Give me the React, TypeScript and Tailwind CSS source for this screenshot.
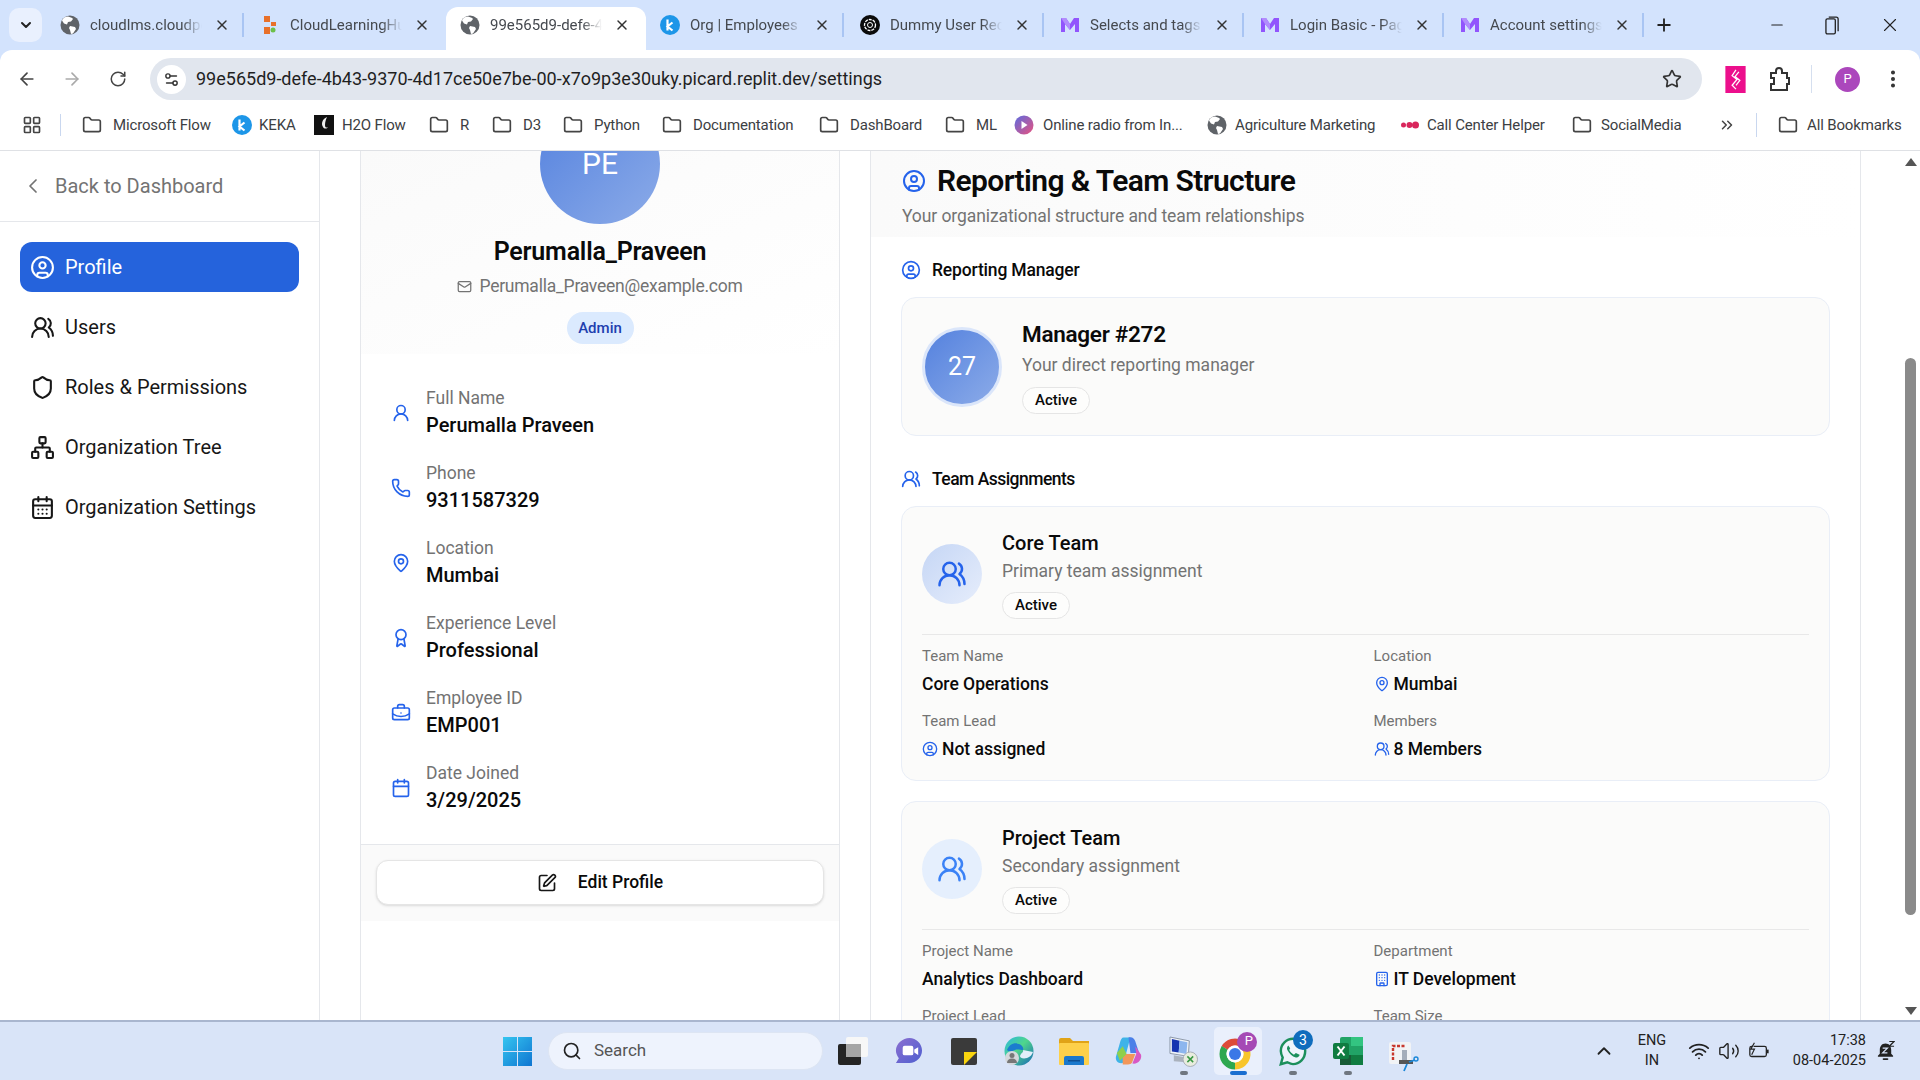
import {
  ArrowLeft,
  ArrowRight,
  Award,
  BriefcaseBusiness,
  Building,
  Calendar,
  CalendarDays,
  ChevronDown,
  ChevronLeft,
  ChevronsRight,
  ChevronUp,
  CircleUser,
  EllipsisVertical,
  Folder,
  LayoutGrid,
  Mail,
  MapPin,
  Minus,
  Network,
  Phone,
  Plus,
  RotateCw,
  Search,
  Settings2,
  Shield,
  SquarePen,
  Star,
  UserRound,
  UsersRound,
  Volume2,
  Wifi,
  X,
} from "lucide-react";
import type { ReactNode } from "react";

function Globe() {
  return (
    <svg viewBox="0 0 20 20" className="w-5 h-5 shrink-0">
      <circle cx="10" cy="10" r="9.5" fill="#5f6368" />
      <path d="M8 1.5c2 1 4 1 5 2.5l-2 2.5-3 .5-1 2.5-3-1-2-3C3 3 5.500 1.500 8 1.500zM10 11l5 1 1 2-3 4.500-2 .5-1-4-1-2z" fill="#fff" />
    </svg>
  );
}

function CloudHub() {
  return (
    <svg viewBox="0 0 20 20" className="w-5 h-5 shrink-0">
      <rect x="4" y="1" width="6" height="6" fill="#e8702a" />
      <rect x="4" y="12" width="6" height="7" fill="#e8702a" />
      <rect x="11" y="7" width="5" height="4" fill="#e8702a" />
      <circle cx="13" cy="15" r="2.500" fill="#6cc04a" />
    </svg>
  );
}

function Keka() {
  return (
    <svg viewBox="0 0 20 20" className="w-5 h-5 shrink-0">
      <circle cx="10" cy="10" r="10" fill="#1d96e8" />
      <path d="M7.500 4.500v11M12.500 7.500l-5 4 5 4" fill="none" stroke="#fff" strokeWidth="2.200" />
    </svg>
  );
}

function GptLogo() {
  return (
    <svg viewBox="0 0 20 20" className="w-5 h-5 shrink-0">
      <circle cx="10" cy="10" r="10" fill="#0b0b0b" />
      <circle cx="10" cy="10" r="5.500" fill="none" stroke="#fff" strokeWidth="1.300" strokeDasharray="3 1" />
      <circle cx="10" cy="10" r="2.500" fill="none" stroke="#fff" strokeWidth="1" />
    </svg>
  );
}

function MLogo() {
  return (
    <svg viewBox="0 0 20 20" className="w-5 h-5 shrink-0">
      <path d="M1 3l5 0 4 6 4-6 5 0v14h-4V9l-5 6-5-6v8H1z" fill="#9155fd" />
      <path d="M1 3l5 0 4 6v6L5 9z" fill="#b18cfd" />
    </svg>
  );
}

const tabs = [
  { title: "cloudlms.cloudpoint", icon: <Globe /> },
  { title: "CloudLearningHub", icon: <CloudHub /> },
  { title: "99e565d9-defe-4b43", icon: <Globe />, active: true },
  { title: "Org | Employees", icon: <Keka /> },
  { title: "Dummy User Records", icon: <GptLogo /> },
  { title: "Selects and tags", icon: <MLogo /> },
  { title: "Login Basic - Pages", icon: <MLogo /> },
  { title: "Account settings", icon: <MLogo /> },
];

function TabStrip() {
  return (
    <div className="h-[50px] bg-[#d3e3fd] flex items-end relative shrink-0">
      <div className="w-[33px] h-[34px] ml-[9px] mb-[8px] mr-[4px] rounded-[10px] bg-[#e9f0fe] flex items-center justify-center">
        <ChevronDown className="w-[16px] h-[16px] text-[#222]" strokeWidth={3} />
      </div>
      {tabs.map((t, i) => (
        <div
          key={t.title}
          className={`w-[200px] flex items-center pl-[14px] ${
            t.active ? "h-[43px] bg-white rounded-t-[12px] pb-[7px]" : "h-[50px]"
          }`}
        >
          {t.icon}
          <span className="ml-[10px] w-[112px] text-[15px] leading-[20px] text-[#45494f] whitespace-nowrap overflow-hidden [mask-image:linear-gradient(90deg,#000_82%,transparent)]">
            {t.title}
          </span>
          <X className="ml-[12px] w-[16px] h-[16px] text-[#333]" strokeWidth={2.2} />
          {!t.active && i !== 1 && <div className="ml-[12px] w-[2px] h-[24px] bg-[#a9c5f3]" />}
        </div>
      ))}
      <div className="h-[50px] flex items-center">
        <Plus className="ml-[8px] w-[20px] h-[20px] text-[#222]" strokeWidth={2.2} />
        <Minus className="ml-[94px] w-[18px] h-[18px] text-[#222]" strokeWidth={1.400} />
        <svg viewBox="0 0 16 20" className="ml-[39px] w-[15px] h-[19px]">
          <rect x="1" y="3" width="10" height="16" rx="1.500" fill="none" stroke="#222" strokeWidth="1.400" />
          <path d="M4 1h8a2 2 0 0 1 2 2v13" fill="none" stroke="#222" strokeWidth="1.400" />
        </svg>
        <X className="ml-[39px] w-[22px] h-[22px] text-[#222]" strokeWidth={1.200} />
      </div>
    </div>
  );
}

function Toolbar() {
  return (
    <div className="h-[55px] bg-[#d3e3fd] shrink-0">
      <div className="h-full pt-[3px] bg-white rounded-t-[12px] flex items-center">
        <ArrowLeft className="ml-[17px] w-[20px] h-[20px] text-[#444]" strokeWidth={2} />
        <ArrowRight className="ml-[25px] w-[20px] h-[20px] text-[#aaa]" strokeWidth={2} />
        <RotateCw className="ml-[27px] w-[18px] h-[18px] text-[#444]" strokeWidth={2} />
        <div className="ml-[23px] w-[1552px] h-[42px] rounded-full bg-[#e1e6ee] flex items-center">
          <div className="ml-[7px] w-[29px] h-[29px] rounded-full bg-white flex items-center justify-center">
            <Settings2 className="w-[17px] h-[17px] text-[#333]" strokeWidth={2} />
          </div>
          <span className="ml-[10px] text-[18px] leading-[24px] text-[#1f1f1f] whitespace-nowrap">
            99e565d9-defe-4b43-9370-4d17ce50e7be-00-x7o9p3e30uky.picard.replit.dev/settings
          </span>
          <Star className="ml-auto mr-[20px] w-[20px] h-[20px] text-[#333]" strokeWidth={2} />
        </div>
        <svg viewBox="0 0 21 28" className="ml-[23px] w-[21px] h-[27px]">
          <rect width="21" height="28" fill="#ec0f8c" />
          <path d="M11 4l-4 6 5 4-5 6 4 4M14 6l-4 5 5 4-4 5" fill="none" stroke="#fff" strokeWidth="1.300" />
        </svg>
        <svg viewBox="0 0 20 24" className="ml-[24px] w-[20px] h-[24px]">
          <path d="M1 6h5V4a3 3 0 0 1 6 0v2h5v5h2v6h-2v6H1v-6h3v-6H1z" fill="none" stroke="#333" strokeWidth="2" />
        </svg>
        <div className="ml-[21px] w-[1px] h-[28px] bg-[#d5dfef]" />
        <div className="ml-[23px] w-[25px] h-[25px] rounded-full bg-[#ab47bc] flex items-center justify-center text-white text-[13px]">
          P
        </div>
        <EllipsisVertical className="ml-[22px] w-[22px] h-[22px] text-[#333]" strokeWidth={2.400} />
      </div>
    </div>
  );
}

function BmFolder() {
  return <Folder className="w-[20px] h-[20px] text-[#444] shrink-0" strokeWidth={2} />;
}

const bookmarks: { label: string; w: string; gap: string; icon: ReactNode }[] = [
  { label: "Microsoft Flow", w: "w-[150px]", gap: "gap-[11px]", icon: <BmFolder /> },
  { label: "KEKA", w: "w-[82px]", gap: "gap-[7px]", icon: <Keka /> },
  {
    label: "H2O Flow",
    w: "w-[115px]",
    gap: "gap-[8px]",
    icon: (
      <svg viewBox="0 0 20 20" className="w-5 h-5 shrink-0">
        <rect width="20" height="20" fill="#111" />
        <path d="M13 2c-5 2-6 7-4 10 1 2 4 2 5 0-1 1-3 1-3-2 0-3 1-6 2-8z" fill="#eee" />
      </svg>
    ),
  },
  { label: "R", w: "w-[63px]", gap: "gap-[11px]", icon: <BmFolder /> },
  { label: "D3", w: "w-[71px]", gap: "gap-[11px]", icon: <BmFolder /> },
  { label: "Python", w: "w-[99px]", gap: "gap-[11px]", icon: <BmFolder /> },
  { label: "Documentation", w: "w-[157px]", gap: "gap-[11px]", icon: <BmFolder /> },
  { label: "DashBoard", w: "w-[126px]", gap: "gap-[11px]", icon: <BmFolder /> },
  { label: "ML", w: "w-[69px]", gap: "gap-[11px]", icon: <BmFolder /> },
  {
    label: "Online radio from In...",
    w: "w-[193px]",
    gap: "gap-[9px]",
    icon: (
      <svg viewBox="0 0 20 20" className="w-5 h-5 shrink-0">
        <defs>
          <linearGradient id="radio" x1="0" y1="0" x2="1" y2="1">
            <stop offset="0" stopColor="#5b6be0" />
            <stop offset="1" stopColor="#e9527e" />
          </linearGradient>
        </defs>
        <circle cx="10" cy="10" r="9.500" fill="url(#radio)" />
        <path d="M7.500 6l6 4-6 4z" fill="#fff" />
      </svg>
    ),
  },
  { label: "Agriculture Marketing", w: "w-[193px]", gap: "gap-[8px]", icon: <Globe /> },
  {
    label: "Call Center Helper",
    w: "w-[172px]",
    gap: "gap-[7px]",
    icon: (
      <svg viewBox="0 0 20 20" className="w-5 h-5 shrink-0">
        <circle cx="3.500" cy="10" r="2.500" fill="#d9265c" />
        <circle cx="9.500" cy="10" r="3" fill="#d9265c" />
        <circle cx="15.500" cy="10" r="3.500" fill="#d9265c" />
      </svg>
    ),
  },
  { label: "SocialMedia", w: "w-[147px]", gap: "gap-[9px]", icon: <BmFolder /> },
];

function BookmarksBar() {
  return (
    <div className="h-[46px] pb-[5px] bg-white flex items-center border-b border-[#dfe1e5] shrink-0 text-[15px] leading-[20px] text-[#3c4043] tracking-[-0.01em]">
      <LayoutGrid className="ml-[22px] w-[20px] h-[20px] text-[#444]" strokeWidth={2} />
      <div className="ml-[18px] w-[1px] h-[22px] bg-[#c9d7ef]" />
      <div className="ml-[21px] flex items-center">
        {bookmarks.map((b) => (
          <div key={b.label} className={`${b.w} ${b.gap} flex items-center whitespace-nowrap`}>
            {b.icon}
            <span>{b.label}</span>
          </div>
        ))}
      </div>
      <ChevronsRight className="ml-[-1px] w-[18px] h-[18px] text-[#444]" strokeWidth={2} />
      <div className="ml-[20px] w-[1px] h-[24px] bg-[#c9d7ef]" />
      <div className="ml-[21px] flex items-center gap-[9px] whitespace-nowrap">
        <BmFolder />
        <span>All Bookmarks</span>
      </div>
    </div>
  );
}

const navItems = [
  { label: "Profile", icon: CircleUser, active: true },
  { label: "Users", icon: UsersRound },
  { label: "Roles & Permissions", icon: Shield },
  { label: "Organization Tree", icon: Network },
  { label: "Organization Settings", icon: CalendarDays },
];

function Sidebar() {
  return (
    <aside className="w-[320px] shrink-0 border-r border-[#e5e7eb] bg-white">
      <div className="h-[71px] border-b border-[#e5e7eb] flex items-center pl-[21px] text-[#737373]">
        <ChevronLeft className="w-[24px] h-[24px]" strokeWidth={1.750} />
        <span className="ml-[10px] text-[20px] leading-[28px]">Back to Dashboard</span>
      </div>
      <nav className="pt-[20px] pl-[20px] flex flex-col gap-[10px] w-[299px]">
        {navItems.map((n) => (
          <div
            key={n.label}
            className={`h-[50px] flex items-center pl-[10px] gap-[10px] rounded-[12px] text-[20px] ${
              n.active ? "bg-[#2563dc] text-white" : "text-[#171717]"
            }`}
          >
            <n.icon className="w-[25px] h-[25px] shrink-0" strokeWidth={2} />
            <span>{n.label}</span>
          </div>
        ))}
      </nav>
    </aside>
  );
}

const infoRows = [
  { label: "Full Name", value: "Perumalla Praveen", icon: UserRound },
  { label: "Phone", value: "9311587329", icon: Phone },
  { label: "Location", value: "Mumbai", icon: MapPin },
  { label: "Experience Level", value: "Professional", icon: Award },
  { label: "Employee ID", value: "EMP001", icon: BriefcaseBusiness },
  { label: "Date Joined", value: "3/29/2025", icon: Calendar },
];

function ProfileCard() {
  return (
    <section className="w-[480px] shrink-0 border-x border-[#e5e7eb] bg-white">
      <div className="h-[203px] bg-gradient-to-br from-[#fafafa] to-white flex flex-col items-center">
        <div className="mt-[-47px] w-[120px] h-[120px] shrink-0 rounded-full bg-gradient-to-br from-[#5481de] to-[#8cabe8] flex items-center justify-center text-white text-[30px]">
          <span className="mt-[-2px]">PE</span>
        </div>
        <h2 className="mt-[12px] text-[25px] leading-[32px] font-semibold tracking-[-0.008em] text-[#0a0a0a]">Perumalla_Praveen</h2>
        <div className="mt-[6px] flex items-center gap-[7px] text-[17.500px] leading-[24px] tracking-[-0.014em] text-[#737373]">
          <Mail className="w-[15px] h-[15px]" strokeWidth={2} />
          <span>Perumalla_Praveen@example.com</span>
        </div>
        <div className="mt-[14px] w-[67px] h-[32px] rounded-full bg-[#dbeafe] flex items-center justify-center text-[15px] font-medium text-[#1e40af]">
          Admin
        </div>
      </div>
      <div className="pt-[32px] pb-[29px] flex flex-col gap-[21px] pl-[30px]">
        {infoRows.map((r) => (
          <div key={r.label} className="flex items-center">
            <r.icon className="w-[20px] h-[20px] text-[#2563eb] shrink-0" strokeWidth={2} />
            <div className="ml-[15px]">
              <div className="text-[17.500px] leading-[24px] text-[#737373]">{r.label}</div>
              <div className="text-[20px] leading-[30px] font-medium text-[#0a0a0a]">{r.value}</div>
            </div>
          </div>
        ))}
      </div>
      <div className="border-t border-[#e5e7eb] bg-[#fafafa] pt-[15px] pb-[16px] px-[15px]">
        <div className="h-[45px] rounded-[12px] border border-[#e5e5e5] bg-white shadow-sm flex items-center justify-center gap-[21px]">
          <SquarePen className="w-[20px] h-[20px] text-[#171717]" strokeWidth={2} />
          <span className="text-[17.500px] font-medium text-[#0a0a0a]">Edit Profile</span>
        </div>
      </div>
    </section>
  );
}

function ActiveBadge() {
  return (
    <div className="w-[68px] h-[27px] rounded-full border border-[#e5e5e5] flex items-center justify-center text-[15px] font-medium text-[#0a0a0a] bg-[#fdfdfc]">
      Active
    </div>
  );
}

function SectionTitle({ icon, title, tracking }: { icon: ReactNode; title: string; tracking: string }) {
  return (
    <div className="flex items-center h-[26px] gap-[11px]">
      {icon}
      <span className={`text-[17.500px] leading-[26px] font-medium text-[#0a0a0a] ${tracking}`}>{title}</span>
    </div>
  );
}

function Field({ label, value, icon }: { label: string; value: string; icon?: ReactNode }) {
  return (
    <div>
      <div className="text-[15px] leading-[20px] text-[#737373]">{label}</div>
      <div className="mt-[5px] flex items-center gap-[4px] text-[17.500px] leading-[26px] font-medium text-[#0a0a0a]">
        {icon}
        <span>{value}</span>
      </div>
    </div>
  );
}

function TeamCard({
  name,
  sub,
  circle,
  iconColor,
  children,
}: {
  name: string;
  sub: string;
  circle: string;
  iconColor: string;
  children: ReactNode;
}) {
  return (
    <div className="rounded-[15px] border border-[#e9eef7] bg-[#fbfbfa] px-[20px] pt-[22px] pb-[18px]">
      <div className="flex items-center gap-[20px]">
        <div className={`w-[60px] h-[60px] rounded-full flex items-center justify-center ${circle}`}>
          <UsersRound className={`w-[30px] h-[30px] ${iconColor}`} strokeWidth={2} />
        </div>
        <div>
          <div className="text-[20px] leading-[28px] font-medium text-[#0a0a0a]">{name}</div>
          <div className="mt-[2px] text-[17.500px] leading-[24px] text-[#737373]">{sub}</div>
          <div className="mt-[9px]">
            <ActiveBadge />
          </div>
        </div>
      </div>
      <div className="mt-[15px] border-t border-[#e8e8e8] pt-[11px] grid grid-cols-2 gap-x-4 gap-y-[14px]">{children}</div>
    </div>
  );
}

const blueSm = "w-[16px] h-[16px] text-[#2563eb] shrink-0";

function ReportingCard() {
  return (
    <section className="flex-1 border-x border-[#e5e7eb] bg-white">
      <div className="h-[86px] bg-gradient-to-r from-[#fafafa] to-white pl-[31px] pt-[12px]">
        <div className="flex items-center h-[36px] gap-[11px]">
          <CircleUser className="w-[24px] h-[24px] text-[#2563eb]" strokeWidth={2} />
          <h2 className="text-[30px] leading-[36px] font-semibold tracking-[-0.02em] text-[#0a0a0a]">Reporting &amp; Team Structure</h2>
        </div>
        <p className="mt-[5px] text-[17.500px] leading-[24px] tracking-[-0.005em] text-[#737373]">
          Your organizational structure and team relationships
        </p>
      </div>
      <div className="px-[30px] pt-[20px]">
        <SectionTitle
          icon={<CircleUser className="w-[20px] h-[20px] text-[#2563eb]" strokeWidth={2} />}
          title="Reporting Manager"
          tracking="tracking-[-0.01em]"
        />
        <div className="mt-[14px] h-[139px] rounded-[15px] border border-[#e9eef7] bg-[#fbfbfa] flex items-center pl-[20px] gap-[20px]">
          <div className="w-[80px] h-[80px] rounded-full border-[3px] border-[#dbe6fa] bg-gradient-to-br from-[#5481de] to-[#8cabe8] flex items-center justify-center text-white text-[25px]">
            27
          </div>
          <div>
            <div className="text-[22.500px] leading-[30px] font-semibold tracking-[-0.012em] text-[#0a0a0a]">Manager #272</div>
            <div className="mt-[4px] text-[17.500px] leading-[24px] text-[#737373]">Your direct reporting manager</div>
            <div className="mt-[10px]">
              <ActiveBadge />
            </div>
          </div>
        </div>
        <div className="mt-[30px]">
          <SectionTitle
            icon={<UsersRound className="w-[20px] h-[20px] text-[#2563eb]" strokeWidth={2} />}
            title="Team Assignments"
            tracking="tracking-[-0.03em]"
          />
        </div>
        <div className="mt-[14px] flex flex-col gap-[20px]">
          <TeamCard
            name="Core Team"
            sub="Primary team assignment"
            circle="bg-gradient-to-br from-[#c5d6f5] to-[#e6edfb]"
            iconColor="text-[#2563eb]"
          >
            <Field label="Team Name" value="Core Operations" />
            <Field label="Location" value="Mumbai" icon={<MapPin className={blueSm} />} />
            <Field label="Team Lead" value="Not assigned" icon={<CircleUser className={blueSm} />} />
            <Field label="Members" value="8 Members" icon={<UsersRound className={blueSm} />} />
          </TeamCard>
          <TeamCard name="Project Team" sub="Secondary assignment" circle="bg-[#e5effd]" iconColor="text-[#3b82f6]">
            <Field label="Project Name" value="Analytics Dashboard" />
            <Field label="Department" value="IT Development" icon={<Building className={blueSm} />} />
            <div className="text-[15px] leading-[20px] text-[#737373]">Project Lead</div>
            <div className="text-[15px] leading-[20px] text-[#737373]">Team Size</div>
          </TeamCard>
        </div>
      </div>
    </section>
  );
}

function ScrollBar() {
  return (
    <div className="w-[15px] ml-[44px] shrink-0 bg-white flex flex-col items-start">
      <div className="mt-[7px] w-0 h-0 border-x-[6px] border-x-transparent border-b-[8px] border-b-[#555]" />
      <div className="mt-[192px] w-[11px] h-[557px] rounded-full bg-[#8a8a8a]" />
      <div className="mt-auto mb-[5px] w-0 h-0 border-x-[6px] border-x-transparent border-t-[8px] border-t-[#555]" />
    </div>
  );
}

function Main() {
  return (
    <div className="flex-1 min-h-0 flex overflow-hidden bg-white">
      <Sidebar />
      <div className="flex-1 flex pl-[40px] gap-[30px] overflow-hidden">
        <ProfileCard />
        <ReportingCard />
      </div>
      <ScrollBar />
    </div>
  );
}

function Slot({ w, dot, children }: { w: string; dot?: boolean; children: ReactNode }) {
  return (
    <div className={`${w} h-[48px] flex flex-col items-center justify-center relative`}>
      {children}
      {dot && <div className="absolute bottom-[0px] w-[8px] h-[4px] rounded-full bg-[#6f7680]" />}
    </div>
  );
}

function Taskbar() {
  return (
    <div className="h-[60px] shrink-0 border-t-2 border-[#a9b6cf] bg-[#d9e4f8] flex items-center">
      <svg viewBox="0 0 29 29" className="ml-[503px] w-[29px] h-[29px]">
        <defs>
          <linearGradient id="win" x1="0" y1="0" x2="1" y2="1">
            <stop offset="0" stopColor="#35c5f0" />
            <stop offset="1" stopColor="#0f75d1" />
          </linearGradient>
        </defs>
        <path d="M0 0h14v14H0zM15 0h14v14H15zM0 15h14v14H0zM15 15h14v14H15z" fill="url(#win)" />
      </svg>
      <div className="ml-[16px] w-[275px] h-[38px] rounded-full bg-[#eef3fd] border border-[#dde5f3] flex items-center">
        <Search className="ml-[13px] w-[20px] h-[20px] text-[#222]" strokeWidth={2} />
        <span className="ml-[12px] text-[17px] text-[#555]">Search</span>
      </div>
      <Slot w="w-[58px]">
        <svg viewBox="0 0 31 29" className="w-[31px] h-[29px]">
          <rect x="9" y="0" width="22" height="20" rx="2" fill="#f7f7f7" />
          <rect x="1" y="7" width="23" height="21" rx="2" fill="#242424" />
          <rect x="9" y="7" width="15" height="13" fill="#a5a5a5" />
        </svg>
      </Slot>
      <Slot w="w-[55px]">
        <svg viewBox="0 0 30 30" className="w-[29px] h-[29px]">
          <defs>
            <linearGradient id="meet" x1="0" y1="0" x2="1" y2="1">
              <stop offset="0" stopColor="#8b6fd0" />
              <stop offset="1" stopColor="#4f5fd0" />
            </linearGradient>
          </defs>
          <path d="M16 1c7 0 13 6 13 13s-6 13-13 13H2l3-5C3 19 2 17 2 14 2 7 9 1 16 1z" fill="url(#meet)" />
          <rect x="9" y="9" width="11" height="10" rx="2" fill="#fff" />
          <path d="M21 13l4-2.500v8L21 16z" fill="#fff" />
        </svg>
      </Slot>
      <Slot w="w-[55px]">
        <svg viewBox="0 0 26 27" className="w-[26px] h-[27px]">
          <rect width="26" height="27" rx="2" fill="#3a3a3a" />
          <path d="M13 14h13L13 27z" fill="#f9d40f" />
        </svg>
      </Slot>
      <Slot w="w-[55px]">
        <svg viewBox="0 0 30 30" className="w-[30px] h-[30px]">
          <defs>
            <linearGradient id="edge" x1="0" y1="0" x2="1" y2="1">
              <stop offset="0" stopColor="#2bb6e3" />
              <stop offset="0.45" stopColor="#4fd68b" />
              <stop offset="1" stopColor="#1664b8" />
            </linearGradient>
          </defs>
          <circle cx="15" cy="15" r="14.500" fill="url(#edge)" />
          <path d="M3 14c2-5 7-8 12-6 3 1 5 4 4 6-2 0-6-1-8 0-3 1-5 3-8 0z" fill="#1b7ccf" />
          <path d="M19 14c1 2-2 3-3 6 0 2 3 3 7 2 3-1 5-3 6-6l-5-1z" fill="#e3eefa" />
          <circle cx="8" cy="22" r="7" fill="#d5d8dc" />
          <circle cx="8" cy="19.500" r="2.500" fill="#777" />
          <path d="M3 27c0-3 2-4.500 5-4.500s5 1.500 5 4.500z" fill="#777" />
        </svg>
      </Slot>
      <Slot w="w-[55px]">
        <svg viewBox="0 0 30 27" className="w-[30px] h-[27px]">
          <path d="M0 2a2 2 0 0 1 2-2h9l3 3h16v6H0z" fill="#e0a317" />
          <rect y="5" width="30" height="22" rx="1" fill="#fdd04a" />
          <path d="M5 27v-7a2 2 0 0 1 2-2h16a2 2 0 0 1 2 2v7z" fill="#1a78cc" />
          <rect x="9" y="22" width="12" height="1.500" fill="#0e4f92" />
        </svg>
      </Slot>
      <Slot w="w-[55px]">
        <svg viewBox="0 0 30 30" className="w-[29px] h-[30px]">
          <path d="M10 1h7L10 27c-4 2-9-1-8-6l4-14c1-4 2-6 4-6z" fill="#3fb3e8" />
          <path d="M15 1c4-1 6 1 7 4l4 12H17z" fill="#4a7fe8" />
          <path d="M9 18h13l-3 8c-1 3-4 3-10 3z" fill="#f2975a" />
          <path d="M22 10l6 9c1 5-3 10-9 9l4-10z" fill="#d859c4" />
          <path d="M3 17l6-7 4 8-7 7z" fill="#8ed04c" />
        </svg>
      </Slot>
      <Slot w="w-[55px]" dot>
        <svg viewBox="0 0 30 32" className="w-[29px] h-[31px]">
          <path d="M1 1l20 4-1 16-19-3z" fill="#eef2f7" stroke="#8c97a8" />
          <path d="M3 3l8 2-1 12-7-1z" fill="#1533b0" />
          <path d="M11 5l8 1.500-1 12-8-1.500z" fill="#8db6ee" />
          <path d="M5 20l11 2 2 5-13-1z" fill="#aab2bd" />
          <circle cx="22" cy="24" r="7.500" fill="#e8ecdf" stroke="#a7adb5" />
          <path d="M19 21l6 6M25 21l-6 6" stroke="#3b9a45" strokeWidth="1.600" />
        </svg>
      </Slot>
      <Slot w="w-[54px]">
        <div className="w-[48px] h-[48px] rounded-[5px] bg-[#eaf0fc] flex items-center justify-center relative">
          <svg viewBox="0 0 42 42" className="w-[42px] h-[42px]">
            <circle cx="18" cy="24" r="12" fill="none" stroke="#dd4b39" strokeWidth="7" strokeDasharray="25.130 50.270" transform="rotate(210 18 24)" />
            <circle cx="18" cy="24" r="12" fill="none" stroke="#f8c52c" strokeWidth="7" strokeDasharray="25.130 50.270" transform="rotate(-30 18 24)" />
            <circle cx="18" cy="24" r="12" fill="none" stroke="#2ea84f" strokeWidth="7" strokeDasharray="25.130 50.270" transform="rotate(90 18 24)" />
            <circle cx="18" cy="24" r="8.500" fill="#fff" />
            <circle cx="18" cy="24" r="6" fill="#3a78e7" />
            <circle cx="30" cy="12" r="10" fill="#a54ab5" />
          </svg>
          <span className="absolute top-[6px] right-[9px] text-[13px] leading-[16px] text-white">P</span>
          <div className="absolute bottom-[0px] w-[17px] h-[4px] rounded-full bg-[#1a6ed0]" />
        </div>
      </Slot>
      <Slot w="w-[56px]" dot>
        <svg viewBox="0 0 32 32" className="w-[30px] h-[30px]">
          <path d="M16 3C9 3 3 9 3 16c0 3 1 5 2 7l-2 7 7-2c2 1 4 2 6 2 7 0 13-6 13-14S23 3 16 3z" fill="#eef3fb" stroke="#1c8f5b" strokeWidth="2.600" />
          <path d="M11 10c-1 1-2 3-1 5 2 4 5 7 9 8 2 0 4-1 4-3l-4-2-2 2c-2-1-4-3-5-5l1-2-2-3z" fill="#1c8f5b" />
        </svg>
        <div className="absolute top-[3px] right-[8px] w-[20px] h-[20px] rounded-full bg-[#0f6cbd] text-white text-[14px] leading-[20px] text-center">3</div>
      </Slot>
      <Slot w="w-[54px]" dot>
        <svg viewBox="0 0 30 28" className="w-[30px] h-[28px]">
          <rect x="7" y="0" width="23" height="28" rx="2" fill="#21a366" />
          <rect x="18" y="0" width="12" height="9" fill="#33c481" />
          <rect x="18" y="18" width="12" height="10" fill="#107c41" />
          <rect x="7" y="18" width="11" height="10" fill="#185c37" />
          <rect x="0" y="6" width="16" height="16" rx="2" fill="#107c41" />
          <path d="M4.500 9.500l7 9M11.500 9.500l-7 9" stroke="#fff" strokeWidth="2" />
        </svg>
      </Slot>
      <Slot w="w-[58px]">
        <svg viewBox="0 0 30 30" className="mt-[12px] w-[30px] h-[30px]">
          <rect x="0" y="0" width="22" height="22" rx="2" fill="#f1f3f6" />
          <path d="M4 18V4h13" fill="none" stroke="#c8372d" strokeWidth="2.400" strokeDasharray="3 1.500" />
          <rect x="13" y="8" width="5" height="14" fill="#a4adba" />
          <rect x="10" y="18" width="14" height="4" fill="#555" />
          <path d="M18 22l-3 7M20 20l6-2" stroke="#1b87d8" strokeWidth="1.800" />
          <circle cx="27" cy="17" r="2" fill="none" stroke="#1b87d8" strokeWidth="1.400" />
        </svg>
      </Slot>
      <ChevronUp className="ml-[160px] w-[22px] h-[22px] text-[#222]" strokeWidth={2} />
      <div className="ml-[9px] w-[56px] text-center text-[14.500px] leading-[20px] text-[#222]">
        <div>ENG</div>
        <div>IN</div>
      </div>
      <Wifi className="ml-[8px] w-[22px] h-[22px] text-[#222]" strokeWidth={2} />
      <Volume2 className="ml-[8px] w-[22px] h-[22px] text-[#222]" strokeWidth={1.500} />
      <svg viewBox="0 0 24 20" className="ml-[8px] w-[22px] h-[20px]">
        <rect x="2" y="5" width="18" height="11" rx="2" fill="none" stroke="#222" strokeWidth="1.400" />
        <rect x="20.500" y="8.500" width="2" height="4" fill="#222" />
        <path d="M7 1L3 8h4l-3 6" fill="#d9e4f8" stroke="#222" strokeWidth="1.300" />
      </svg>
      <div className="w-[96px] text-right text-[14.500px] leading-[20px] text-[#222] whitespace-nowrap">
        <div>17:38</div>
        <div>08-04-2025</div>
      </div>
      <svg viewBox="0 0 20 22" className="ml-[10px] w-[19px] h-[22px]">
        <path d="M10 3c-4 0-6 3-6 7v4l-2 2v1h16v-1l-2-2v-4c0-4-2-7-6-7z" fill="#222" />
        <rect x="7" y="18.500" width="6" height="2" rx="1" fill="#222" />
        <path d="M7 8h5l-5 5h5" fill="none" stroke="#d9e4f8" strokeWidth="1.300" />
        <path d="M14 1h5l-5 5h5" fill="none" stroke="#222" strokeWidth="1.300" />
      </svg>
    </div>
  );
}

export default function App() {
  return (
    <div className="w-[1920px] h-[1080px] flex flex-col overflow-hidden bg-white font-['Roboto','Noto_Sans',sans-serif]">
      <TabStrip />
      <Toolbar />
      <BookmarksBar />
      <Main />
      <Taskbar />
    </div>
  );
}
